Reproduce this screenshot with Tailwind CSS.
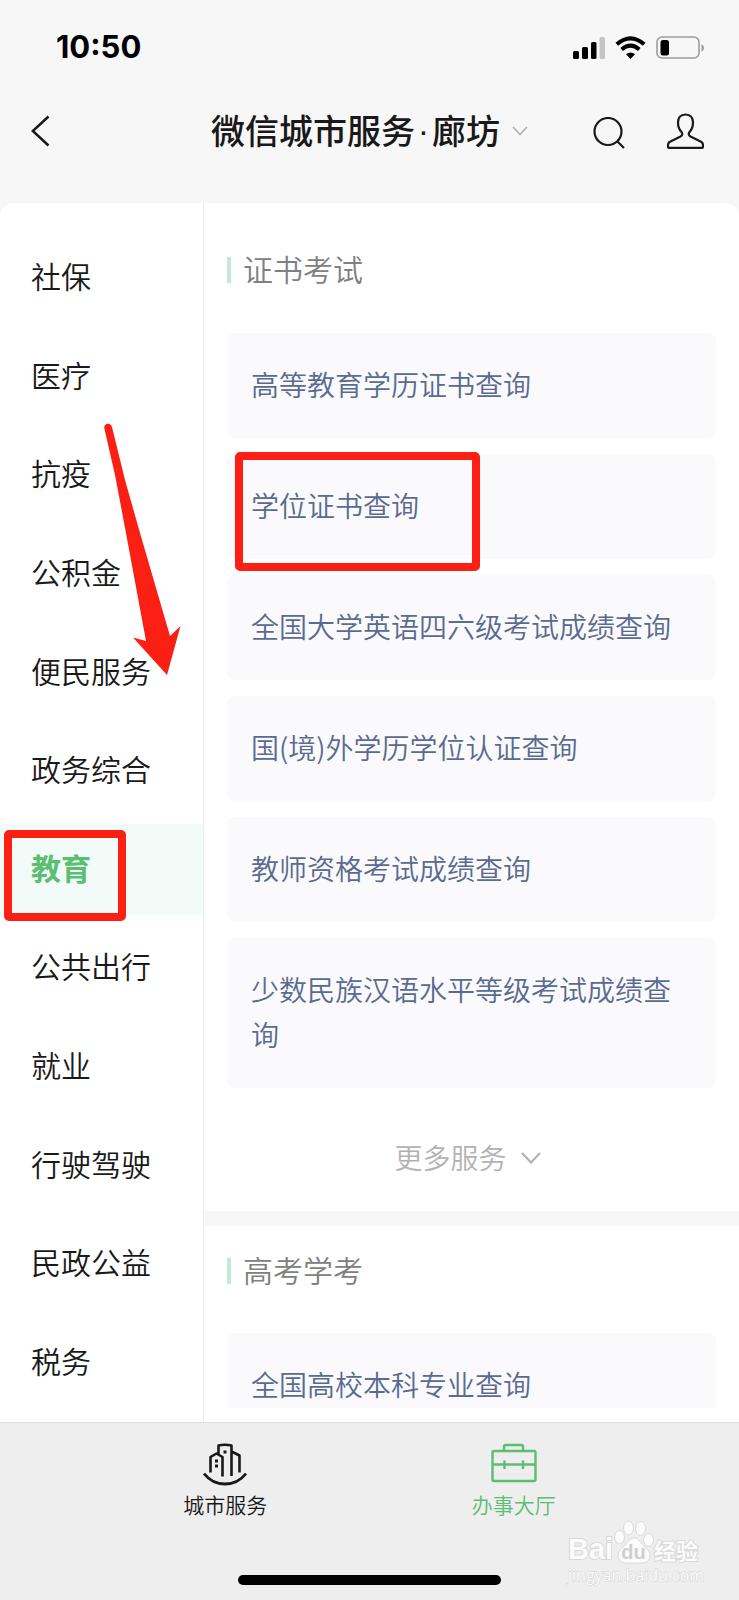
<!DOCTYPE html>
<html lang="zh-CN">
<head>
<meta charset="utf-8">
<meta name="viewport" content="width=device-width, initial-scale=1">
<title>微信城市服务</title>
<script src="https://cdn.jsdelivr.net/npm/@tailwindcss/browser@4"></script>
</head>
<body class="relative flex min-h-screen flex-col bg-[#f7f7f7] font-['Noto_Sans_CJK_SC',sans-serif] font-[350] text-[#191919]">

  <!-- Status bar -->
  <div class="flex h-[94px] items-center justify-between pr-[34px] pl-14 text-black">
    <span class="font-['Inter',sans-serif] text-[31px] font-bold">10:50</span>
    <div class="flex items-center gap-[10px]">
      <svg class="h-[23px] w-8" viewBox="0 0 32 23" aria-hidden="true">
        <rect x="0" y="15" width="6" height="8" rx="1.5"/>
        <rect x="9" y="11" width="6" height="12" rx="1.5"/>
        <rect x="18" y="6" width="5.500" height="17" rx="1.500"/>
        <rect x="26.500" y="1" width="5.500" height="22" rx="1.500" fill="#c4c4c4"/>
      </svg>
      <svg class="h-[23px] w-[31px]" viewBox="0 0 31 23" aria-hidden="true" fill="none" stroke="#000" stroke-width="4">
        <path d="M1.800 8.300Q15.500-3.700 29.200 8.300"/>
        <path d="M6.700 13.500Q15.500 5.700 24.300 13.500"/>
        <path d="M15.500 23 11 18.300Q15.500 14.600 20 18.300Z" fill="#000" stroke="none"/>
      </svg>
      <svg class="h-[23px] w-[49px]" viewBox="0 0 49 23" aria-hidden="true">
        <rect x="1" y="1" width="42" height="21" rx="5" fill="none" stroke="#9c9c9c" stroke-width="1.600"/>
        <rect x="4.500" y="4" width="8.500" height="15.500" rx="2.500"/>
        <path d="M45.500 8v8q2.500-1.500 2.500-4t-2.500-4Z" fill="#9c9c9c"/>
      </svg>
    </div>
  </div>

  <!-- Page header -->
  <header class="mb-[35px] grid h-[74px] grid-cols-[1fr_auto_1fr] items-center">
    <button type="button" aria-label="返回" class="ml-[31px] w-5">
      <svg class="h-8 w-5" viewBox="0 0 20 32" fill="none" stroke="#191919" stroke-width="2.500"><path d="M17.500 1.500 1.800 16l15.700 14.500"/></svg>
    </button>
    <button type="button" class="flex items-center gap-3">
      <h1 class="flex pb-[2px] text-[34px] leading-[44px] font-medium"><span>微信城市服务</span><span class="w-[17px] text-center font-['Liberation_Sans',sans-serif]">·</span><span>廊坊</span></h1>
      <svg class="h-3 w-4" viewBox="0 0 16 12" fill="none" stroke="#b2b2b2" stroke-width="1.800" aria-hidden="true"><path d="m1 2 7 7.500L15 2"/></svg>
    </button>
    <div class="flex items-center justify-end gap-[42px] pr-[35px]">
      <button type="button" aria-label="搜索" class="pt-1">
        <svg class="block h-8 w-8" viewBox="0 0 32 32" fill="none" stroke="#191919" stroke-width="2.200"><circle cx="15" cy="14.500" r="13.500"/><path d="m24 24 7 7"/></svg>
      </button>
      <button type="button" aria-label="我的">
        <svg class="block h-9 w-[37px]" viewBox="0 0 37 36" fill="none" stroke="#191919" stroke-width="2.200" stroke-linejoin="round"><path d="M18.500 1.500C13.500 1.500 11 5 11 9.500c0 4.500 1.500 7.500 3.500 9.500 1.300 1.500.8 3.500-1 4.500L3 28.700C1.500 29.500 1 30.500 1 32v1.500c0 .8.500 1.300 1.300 1.300h32.400c.8 0 1.300-.5 1.300-1.300V32c0-1.500-.5-2.500-2-3.300l-10.500-5.200c-1.800-1-2.300-3-1-4.500 2-2 3.500-5 3.500-9.500C26 5 23.500 1.500 18.500 1.500Z"/></svg>
      </button>
    </div>
  </header>

  <main class="relative flex flex-1 rounded-t-[14px] bg-white">
    <!-- Categories -->
    <nav class="flex w-[204px] shrink-0 flex-col border-r border-[#ededed] pt-[29px] pb-[14px] text-[30px] leading-[87px]">
      <ul class="flex flex-1 flex-col justify-between">
        <li><a href="#" class="block pb-1 pl-[31px]">社保</a></li>
        <li><a href="#" class="block pb-1 pl-[31px]">医疗</a></li>
        <li><a href="#" class="block pb-1 pl-[31px]">抗疫</a></li>
        <li><a href="#" class="block pb-1 pl-[31px]">公积金</a></li>
        <li><a href="#" class="block pb-1 pl-[31px]">便民服务</a></li>
        <li><a href="#" class="block pb-1 pl-[31px]">政务综合</a></li>
        <li class="relative bg-[#f2fbf7]">
          <a href="#" aria-current="page" class="block pb-1 pl-[31px] font-bold text-[#5abe73]">教育</a>
          <span class="pointer-events-none absolute top-[6px] left-1 h-[91px] w-[122px] rounded-[5px] border-8 border-[#fb1f14]"></span>
        </li>
        <li><a href="#" class="block pb-1 pl-[31px]">公共出行</a></li>
        <li><a href="#" class="block pb-1 pl-[31px]">就业</a></li>
        <li><a href="#" class="block pb-1 pl-[31px]">行驶驾驶</a></li>
        <li><a href="#" class="block pb-1 pl-[31px]">民政公益</a></li>
        <li><a href="#" class="block pb-1 pl-[31px]">税务</a></li>
      </ul>
    </nav>

    <!-- Services -->
    <div class="min-w-0 flex-1 text-[28px] leading-[45px] text-[#5a6a90]">
      <section class="px-[23px] pt-11">
        <h2 class="flex items-center gap-3 text-[30px] text-[#808080]"><span class="h-[26px] w-1 bg-[#c1e9d3]"></span><span class="pb-1 leading-[42px]">证书考试</span></h2>
        <ul class="mt-10 flex flex-col gap-4">
          <li><a href="#" class="block rounded-lg bg-[#fafafc] px-6 pt-[29px] pb-[31px]">高等教育学历证书查询</a></li>
          <li class="relative">
            <a href="#" class="block rounded-lg bg-[#fafafc] px-6 pt-[29px] pb-[31px]">学位证书查询</a>
            <span class="pointer-events-none absolute -top-[2px] left-2 h-[119px] w-[245px] rounded-[5px] border-8 border-[#fb1f14]"></span>
          </li>
          <li><a href="#" class="block rounded-lg bg-[#fafafc] px-6 pt-[29px] pb-[31px]">全国大学英语四六级考试成绩查询</a></li>
          <li><a href="#" class="block rounded-lg bg-[#fafafc] px-6 pt-[29px] pb-[31px]">国(境)外学历学位认证查询</a></li>
          <li><a href="#" class="block rounded-lg bg-[#fafafc] px-6 pt-[29px] pb-[31px]">教师资格考试成绩查询</a></li>
          <li><a href="#" class="block rounded-lg bg-[#fafafc] px-6 pt-[29px] pb-[31px]">少数民族汉语水平等级考试成绩查询</a></li>
        </ul>
        <button type="button" class="mx-auto mt-[47px] mb-[31px] flex items-center gap-[14px] pr-2 text-[#b2b2b2]">更多服务
          <svg class="h-3 w-5" viewBox="0 0 20 12" fill="none" stroke="#b2b2b2" stroke-width="2.200" aria-hidden="true"><path d="m1 1 9 9.500L19 1"/></svg>
        </button>
      </section>
      <div class="h-[15px] bg-[#f7f7f7]"></div>
      <section class="px-[23px] pt-[22px]">
        <h2 class="flex items-center gap-3 text-[30px] text-[#808080]"><span class="h-[26px] w-1 bg-[#c1e9d3]"></span><span class="pb-1 leading-[42px]">高考学考</span></h2>
        <a href="#" class="mt-[39px] mb-[14px] block rounded-t-lg bg-[#fafafc] px-6 pt-[29px] pb-px">全国高校本科专业查询</a>
      </section>
    </div>

    <!-- Annotation arrow -->
    <svg class="pointer-events-none absolute top-[220px] left-[103px] h-[253px] w-[78px]" viewBox="0 0 78 253" fill="#fb1f14" aria-hidden="true">
      <path d="M1.500 6C0 0 7.500-1 9 4L22 57 37 110 67 213 77.500 203 64 252 30 214.500 43 218 23 110 12 52Z"/>
    </svg>
  </main>

  <!-- Tab bar -->
  <footer class="flex h-[178px] flex-col items-center justify-between border-t border-[#e0e0e0] bg-[#eeeeee] pb-[15px]">
    <nav class="grid w-full grid-cols-2 px-[81px] pt-5 text-[21px] leading-8">
      <a href="#" class="flex flex-col items-center gap-px">
        <svg class="h-[44px] w-[44px]" viewBox="0 0 44 44" fill="none" stroke="#191919" stroke-width="2.600" stroke-linejoin="round" aria-hidden="true">
          <path d="M1 30.500C12 44.500 32 44.500 43 30.500" stroke-width="2.800"/>
          <path d="M7.500 29.500V14l6-3.500L19.500 14v19.500M15.500 11V2.500Q21.500 1 28.500 2.500V33M28.500 8.500l8 4V29.500"/>
          <path d="M12 16.500h3v3h-3zM12 21.500h3v3h-3zM20.500 7.500h3v3h-3z" fill="#191919" stroke="none"/>
        </svg>
        城市服务
      </a>
      <a href="#" aria-current="page" class="flex flex-col items-center gap-px text-[#5abe73]">
        <svg class="h-[44px] w-[46px]" viewBox="0 0 46 44" fill="none" stroke="currentColor" stroke-width="2.400" stroke-linejoin="round" aria-hidden="true">
          <rect x="1.500" y="8" width="43" height="30" rx="1.500"/>
          <path d="M13 8V3.500q0-1.500 1.500-1.500h16Q32 2 32 3.500V8M1.500 21.500H11M14 21.500H30M33.500 21.500h11M13.500 17.500v8.500M32 17.500v8.500M11 21.500h5M29 21.500h5"/>
        </svg>
        办事大厅
      </a>
    </nav>
    <div class="h-[10px] w-[263px] rounded-full bg-black"></div>
  </footer>

  <!-- Watermark -->
  <div class="pointer-events-none absolute right-[41px] bottom-[14px] w-[130px] font-['Open_Sans',sans-serif] text-[#fbfbfb]">
    <div class="flex items-end justify-between">
      <span class="font-['Liberation_Sans',sans-serif] text-[29px] leading-[29px] font-bold [paint-order:stroke] [-webkit-text-stroke:2px_#d9d9d9]">Bai</span>
      <span class="relative flex h-[44px] w-[40px] shrink-0 items-end justify-center">
        <svg class="absolute inset-0 h-[44px] w-[40px]" viewBox="0 0 40 44" fill="#fbfbfb" stroke="#d9d9d9" aria-hidden="true">
          <ellipse cx="5.500" cy="17" rx="5" ry="6.500"/><ellipse cx="14.500" cy="8" rx="5" ry="7"/><ellipse cx="26.500" cy="8.500" rx="5" ry="7"/><ellipse cx="34.500" cy="20" rx="5" ry="6.500"/>
          <path d="M20 18c-4 0-6 3-8 6-2 3-8 5.500-8 11.500C4 41 8 43 12 43h16c5 0 8-3 8-7.500 0-6-6-8.500-8-11.500-2-3-4-6-8-6Z"/>
        </svg>
        <span class="relative font-['Liberation_Sans',sans-serif] text-[20px] leading-[24px] font-bold text-[#cfcfcf]">du</span>
      </span>
      <span class="font-['Noto_Sans_CJK_SC',sans-serif] text-[22px] leading-[29px] font-bold whitespace-nowrap [paint-order:stroke] [-webkit-text-stroke:2px_#d9d9d9]">经验</span>
    </div>
    <div class="text-[16px] leading-[22px] font-normal whitespace-nowrap [paint-order:stroke] [-webkit-text-stroke:1px_#d4d4d4]">jingyan.baidu.com</div>
  </div>
</body>
</html>
